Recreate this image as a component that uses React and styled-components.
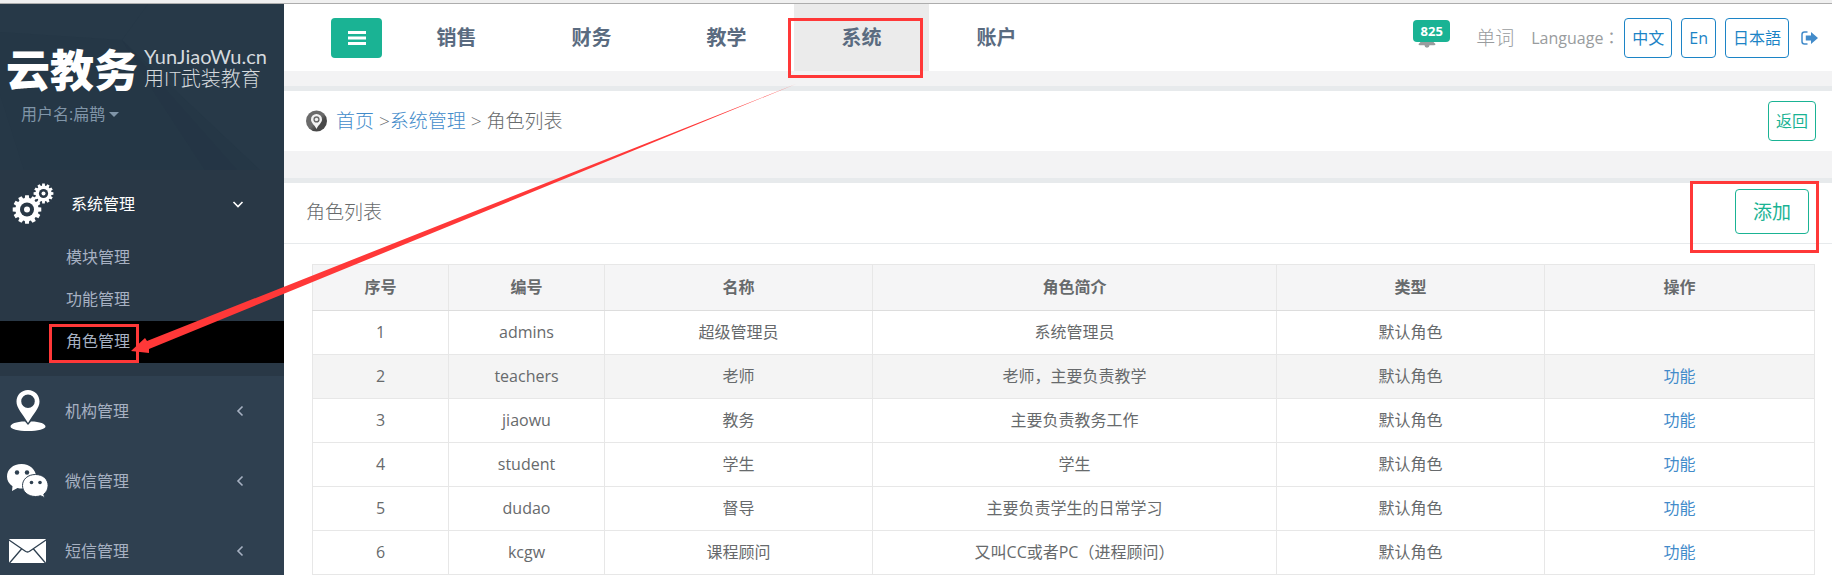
import React from "react";
import styled, { createGlobalStyle, css } from "styled-components";

const GlobalStyle = createGlobalStyle`
  * { box-sizing: border-box; }
  body {
    margin: 0;
    background: #f3f3f4;
    color: #676a6c;
    font-family: "Open Sans", "Noto Sans CJK SC", sans-serif;
    font-size: 16px;
    line-height: 24px;
  }
  a { color: #428bca; text-decoration: none; }
  button { font-family: inherit; cursor: pointer; }
`;

const RED = "#ff3838";

const Page = styled.div`
  position: relative;
  display: flex;
  flex-direction: column;
  height: 100vh;
  overflow: hidden;
`;

const WindowEdge = styled.div`
  flex: none;
  height: 4px;
  background: #f0f0f0;
  border-bottom: 1px solid #adadad;
`;

const Shell = styled.div`
  flex: 1;
  display: flex;
  min-height: 0;
`;

const Sidebar = styled.aside`
  flex: none;
  width: 284px;
  background: #2f4050;
`;

const Profile = styled.div`
  position: relative;
  height: 166px;
  padding: 40px 0 0 6px;
  background: #253746;
`;

const Facets = styled.svg`
  position: absolute;
  inset: 0;
  width: 100%;
  height: 100%;
`;

const Logo = styled.div`
  position: relative;
  display: flex;
  align-items: center;
  gap: 6px;
  height: 48px;
  color: #fff;
`;

const LogoName = styled.strong`
  font-family: "Noto Sans CJK SC", sans-serif;
  font-size: 44px;
  line-height: 48px;
  font-weight: 900;
`;

const LogoSide = styled.div`
  display: flex;
  flex-direction: column;
  color: #d5dade;
`;

const LogoDomain = styled.span`
  font-family: Lato, sans-serif;
  font-size: 20px;
  line-height: 20px;
`;

const LogoSlogan = styled.span`
  font-family: Lato, "Noto Sans CJK SC", sans-serif;
  font-size: 20px;
  line-height: 24px;
  font-weight: 300;
`;

const UserButton = styled.button`
  position: relative;
  display: flex;
  align-items: center;
  gap: 4px;
  margin: 10px 0 0 15px;
  padding: 0;
  border: 0;
  background: none;
  color: #8095a8;
  font-size: 16px;
  line-height: 24px;
`;

const Caret = styled.span`
  border: 5px solid transparent;
  border-top-color: currentColor;
  border-bottom: 0;
`;

const MenuSection = styled.div`
  background: ${(p) => (p.$open ? "#293846" : "transparent")};
  padding-bottom: ${(p) => (p.$open ? "13px" : "0")};
`;

const MenuLink = styled.a`
  display: flex;
  align-items: center;
  height: ${(p) => (p.$active ? "67px" : "70px")};
  padding: 0 ${(p) => (p.$active ? "40px" : "38px")} 0 ${(p) => (p.$active ? "12px" : "6px")};
  gap: 17px;
  && { color: ${(p) => (p.$active ? "#fff" : "#a7b1c2")}; }
  svg { flex: none; }
  span { flex: 1; }
`;

const SubLink = styled.a`
  position: relative;
  display: block;
  padding: 8px 0 10px 66px;
  background: ${(p) => (p.$active ? "#000" : "transparent")};
  && { color: #a7b1c2; }
`;

const Main = styled.main`
  flex: 1;
  min-width: 0;
`;

const TopBar = styled.header`
  display: flex;
  align-items: center;
  height: 67px;
  padding: 0 14px 0 47px;
  background: #fff;
`;

const MenuToggle = styled.button`
  display: flex;
  align-items: center;
  justify-content: center;
  width: 51px;
  height: 40px;
  margin-right: 7px;
  padding: 0;
  border: 0;
  border-radius: 4px;
  background: #1ab394;
`;

const Tabs = styled.nav`
  flex: 1;
  display: flex;
  align-self: stretch;
`;

const Tab = styled.a`
  position: relative;
  width: 135px;
  padding-top: 22px;
  text-align: center;
  font-size: 20px;
  font-weight: 700;
  && { color: #5a6b80; }
  background: ${(p) => (p.$active ? "#ebebeb" : "transparent")};
`;

const Tools = styled.div`
  display: flex;
  align-items: center;
  color: #999c9e;
`;

const Alerts = styled.a`
  position: relative;
  display: block;
  width: 38px;
  height: 30px;
  margin: 0 25px 8px 0;
  && { color: #999c9e; }
  svg { position: absolute; left: 5px; bottom: 1px; }
`;

const Badge = styled.span`
  position: absolute;
  top: 1px;
  left: 0;
  width: 37px;
  border-radius: 4px;
  background: #1ab394;
  color: #fff;
  font-size: 13px;
  line-height: 22px;
  font-weight: 700;
  text-align: center;
`;

const Words = styled.a`
  && { color: #999c9e; }
  margin-right: 17px;
  font-size: 19px;
  font-weight: 300;
`;

const LanguageLabel = styled.span`
  width: 93px;
  font-family: "Open Sans", "Noto Sans CJK TC", sans-serif;
  white-space: nowrap;
`;

const tones = { blue: "#1c84c6", green: "#1ab394" };

const OutlineButton = styled.button`
  height: 40px;
  padding: 0 7px;
  border: 1px solid ${(p) => tones[p.$tone]};
  border-radius: 4px;
  background: #fff;
  color: ${(p) => tones[p.$tone]};
  font-size: 16px;
  line-height: 24px;
  white-space: nowrap;
  ${(p) =>
    p.$large &&
    css`
      height: 45px;
      padding: 0 17px;
      font-size: 19px;
    `}
`;

const Languages = styled.div`
  display: flex;
  gap: 9px;
  margin-right: 12px;
`;

const SignOut = styled.a`
  display: flex;
`;

const Panel = styled.section`
  margin-top: ${(p) => (p.$first ? "15px" : "27px")};
  border-top: 5px solid #e7eaec;
  background: #fff;
`;

const CrumbRow = styled.div`
  display: flex;
  align-items: center;
  justify-content: space-between;
  height: 60px;
  padding: 0 16px 0 22px;
`;

const Crumbs = styled.nav`
  display: flex;
  align-items: center;
  gap: 9px;
  font-size: 19px;
  font-weight: 300;
`;

const PanelHead = styled.div`
  display: flex;
  align-items: flex-start;
  justify-content: space-between;
  height: 61px;
  padding: 6px 23px 0 22px;
  border-bottom: 1px solid #e7eaec;
`;

const PanelTitle = styled.h1`
  margin: 11px 0 0;
  font-size: 19px;
  line-height: 24px;
  font-weight: 300;
`;

const MarkedAction = styled.div`
  position: relative;
`;

const PanelBody = styled.div`
  padding: 20px 17px 0 28px;
`;

const Table = styled.table`
  width: 100%;
  table-layout: fixed;
  border-collapse: collapse;
  text-align: center;
  th, td {
    padding: 0 0 2px;
    height: 44px;
    border: 1px solid #e7e7e7;
  }
  th {
    height: 46px;
    background: #f5f5f6;
    border-bottom-color: #ddd;
    font-weight: 700;
  }
`;

const Row = styled.tr`
  background: ${(p) => (p.$shaded ? "#f4f4f4" : "#fff")};
`;

const Mark = styled.i`
  position: absolute;
  inset: ${(p) => p.$inset};
  border: 3px solid ${RED};
  pointer-events: none;
`;

const Arrow = styled.svg`
  position: absolute;
  top: 0;
  left: 0;
  pointer-events: none;
`;

function gearPath(cx, cy, outer, inner, teeth) {
  const pts = [];
  const step = (Math.PI * 2) / teeth;
  for (let i = 0; i < teeth; i++) {
    [[-0.36, inner], [-0.25, outer], [0.25, outer], [0.36, inner]].forEach(([o, r]) => {
      const a = (i + o) * step;
      pts.push(`${(cx + r * Math.cos(a)).toFixed(2)} ${(cy + r * Math.sin(a)).toFixed(2)}`);
    });
  }
  return `M${pts.join("L")}Z`;
}

const GearsIcon = () => (
  <svg width="42" height="42" viewBox="0 0 42 42" aria-hidden="true">
    <path d={gearPath(15, 26.5, 14.4, 11.6, 12)} fill="#fff" />
    <circle cx="15" cy="26.5" r="7" fill="#293846" />
    <circle cx="15" cy="26.5" r="3" fill="#fff" />
    <path d={gearPath(31.5, 10.5, 10, 8, 12)} fill="#fff" />
    <circle cx="31.5" cy="10.5" r="4.6" fill="#293846" />
    <circle cx="31.5" cy="10.5" r="2" fill="#fff" />
  </svg>
);

const PlaceIcon = () => (
  <svg width="42" height="42" viewBox="0 0 42 42" fill="#fff" aria-hidden="true">
    <path
      fillRule="evenodd"
      d="M22 0C15.500 0 10.500 5 10.500 11.500 10.500 18 16 23 22 33 28 23 33.500 18 33.500 11.500 33.500 5 28.500 0 22 0ZM22 4.500a6.800 6.800 0 1 1 0 13.600 6.800 6.800 0 0 1 0-13.600Z"
    />
    <path d="M19 31.500C10 31.500 4.500 34 4.500 36.500S12 41 22 41s17.500-2 17.500-4.500S34 31.500 25 31.500L22 35Z" />
  </svg>
);

const ChatIcon = () => (
  <svg width="42" height="34" viewBox="0 0 42 34" aria-hidden="true">
    <path fill="#fff" d="M15.500 0C7 0 1 5.500 1 12.500c0 4 2 7.500 5.500 9.800L6 27l5.500-3c1.500.4 3 .6 5 .6C25 24.500 30 19 30 12.500S24 0 15.500 0Z" />
    <path
      fill="#fff"
      stroke="#2f4050"
      d="M29.500 10.500c-7.500 0-13 4.700-13 11s5.500 11 13 11c2 0 3.500-.3 5-.8l4.200 2-.9-3.600c2.700-2 4.300-5 4.300-8.600 0-6.300-5.100-11-12.600-11Z"
    />
    <g fill="#2f4050">
      <circle cx="11" cy="8.500" r="2.200" />
      <circle cx="21" cy="8.500" r="2.200" />
      <circle cx="25.500" cy="18.500" r="1.800" />
      <circle cx="34" cy="18.500" r="1.800" />
    </g>
  </svg>
);

const MailIcon = () => (
  <svg width="42" height="26" viewBox="0 0 42 26" aria-hidden="true">
    <rect x="3" y="1" width="37" height="24" rx="1" fill="#fff" />
    <path d="M3 2 L19 13 Q21.500 15 24 13 L40 2 M3.500 25 L15.500 11 M39.500 25 L27.500 11" fill="none" stroke="#2f4050" strokeWidth="1.300" />
  </svg>
);

const Chevron = ({ down }) => (
  <svg width="12" height="12" viewBox="0 0 12 12" fill="none" stroke="currentColor" strokeWidth="1.600" aria-hidden="true">
    <path d={down ? "M1.500 4 L6 8.500 L10.500 4" : "M8.500 1.500 L4 6 L8.500 10.500"} />
  </svg>
);

const BarsIcon = () => (
  <svg width="18" height="14" viewBox="0 0 18 14" fill="#fff" aria-hidden="true">
    <path d="M0 0h18v3H0zM0 5.500h18v3H0zM0 11h18v3H0z" />
  </svg>
);

const BellIcon = () => (
  <svg width="18" height="18" viewBox="0 0 18 18" fill="currentColor" aria-hidden="true">
    <path d="M9 0a1 1 0 0 1 1 1.300C13 2 14 4.500 14 7c0 3.500 1.500 5.500 3.500 7 0 .7-.5 1.200-1.200 1.200H11.500a2.500 2.500 0 0 1-5 0H1.700C1 15.200.5 14.700.5 14 2.500 12.500 4 10.500 4 7c0-2.500 1-5 4-5.700A1 1 0 0 1 9 0Z" />
  </svg>
);

const SignOutIcon = () => (
  <svg width="17" height="14" viewBox="0 0 17 14" aria-hidden="true">
    <path d="M6.500 1H3.500Q1 1 1 3.500v7Q1 13 3.500 13h3" fill="none" stroke="#428bca" strokeWidth="1.500" />
    <path d="M10 1 L17 7 L10 13 V9.500 H4.800 V4.500 H10Z" fill="#428bca" />
  </svg>
);

const CrumbIcon = () => (
  <svg width="21" height="22" viewBox="0 0 21 22" aria-hidden="true">
    <defs>
      <linearGradient id="crumbShade" x1="0" y1="0" x2="1" y2="1">
        <stop offset="0.500" stopColor="#6b6b6b" />
        <stop offset="0.650" stopColor="#484848" />
      </linearGradient>
    </defs>
    <circle cx="10.500" cy="11" r="10.500" fill="url(#crumbShade)" />
    <path
      fill="#f2f2f2"
      fillRule="evenodd"
      d="M10.500 4A5.400 5.400 0 0 0 5 9.500C5 13 8.500 14.500 10.500 19 12.500 14.500 16 13 16 9.500A5.400 5.400 0 0 0 10.500 4Zm0 2.300a3.100 3.100 0 1 1 0 6.200 3.100 3.100 0 0 1 0-6.200Z"
    />
    <circle cx="10.500" cy="9.400" r="1.700" fill="#f2f2f2" />
  </svg>
);

const tabs = ["销售", "财务", "教学", "系统", "账户"];
const subItems = ["模块管理", "功能管理", "角色管理"];
const closedItems = [
  ["机构管理", PlaceIcon],
  ["微信管理", ChatIcon],
  ["短信管理", MailIcon],
];
const columns = [
  ["序号", 136],
  ["编号", 156],
  ["名称", 268],
  ["角色简介", 404],
  ["类型", 268],
  ["操作", 270],
];
const columnTotal = columns.reduce((sum, [, w]) => sum + w, 0);
const roles = [
  ["admins", "超级管理员", "系统管理员"],
  ["teachers", "老师", "老师，主要负责教学"],
  ["jiaowu", "教务", "主要负责教务工作"],
  ["student", "学生", "学生"],
  ["dudao", "督导", "主要负责学生的日常学习"],
  ["kcgw", "课程顾问", "又叫CC或者PC（进程顾问）"],
];

export default function App() {
  return (
    <Page>
      <GlobalStyle />
      <WindowEdge />
      <Shell>
        <Sidebar>
          <Profile>
            <Facets viewBox="0 0 284 166" preserveAspectRatio="none" aria-hidden="true">
              <path d="M148 0 L122 36 L260 166 L284 166 V0Z" fill="#273948" />
              <path d="M0 28 L122 36 L148 0 H0Z" fill="#273948" />
              <path d="M122 36 L237 166 H205 L150 82Z" fill="#243545" />
              <path d="M0 90 L24 166 H0Z" fill="#263847" />
            </Facets>
            <Logo>
              <LogoName>云教务</LogoName>
              <LogoSide>
                <LogoDomain>YunJiaoWu.cn</LogoDomain>
                <LogoSlogan>用IT武装教育</LogoSlogan>
              </LogoSide>
            </Logo>
            <UserButton type="button">
              用户名:扁鹊
              <Caret />
            </UserButton>
          </Profile>
          <MenuSection $open>
            <MenuLink href="#system" $active>
              <GearsIcon />
              <span>系统管理</span>
              <Chevron down />
            </MenuLink>
            {subItems.map((label) => (
              <SubLink href="#sub" key={label} $active={label === "角色管理"}>
                {label}
                {label === "角色管理" && <Mark $inset="3px 145px 0 49px" />}
              </SubLink>
            ))}
          </MenuSection>
          {closedItems.map(([label, Icon]) => (
            <MenuSection key={label}>
              <MenuLink href="#section">
                <Icon />
                <span>{label}</span>
                <Chevron />
              </MenuLink>
            </MenuSection>
          ))}
        </Sidebar>
        <Main>
          <TopBar>
            <MenuToggle type="button" aria-label="菜单">
              <BarsIcon />
            </MenuToggle>
            <Tabs>
              {tabs.map((label) => (
                <Tab href="#tab" key={label} $active={label === "系统"}>
                  {label}
                  {label === "系统" && <Mark $inset="14px 6px -7px -6px" />}
                </Tab>
              ))}
            </Tabs>
            <Tools>
              <Alerts href="#alerts">
                <BellIcon />
                <Badge>825</Badge>
              </Alerts>
              <Words href="#words">单词</Words>
              <LanguageLabel>Language：</LanguageLabel>
              <Languages>
                <OutlineButton type="button" $tone="blue">中文</OutlineButton>
                <OutlineButton type="button" $tone="blue">En</OutlineButton>
                <OutlineButton type="button" $tone="blue">日本語</OutlineButton>
              </Languages>
              <SignOut href="#logout" aria-label="退出">
                <SignOutIcon />
              </SignOut>
            </Tools>
          </TopBar>
          <Panel $first>
            <CrumbRow>
              <Crumbs>
                <CrumbIcon />
                <span>
                  <a href="#home">首页</a> &gt;<a href="#system">系统管理</a> &gt; 角色列表
                </span>
              </Crumbs>
              <OutlineButton type="button" $tone="green">返回</OutlineButton>
            </CrumbRow>
          </Panel>
          <Panel>
            <PanelHead>
              <PanelTitle>角色列表</PanelTitle>
              <MarkedAction>
                <OutlineButton type="button" $tone="green" $large>添加</OutlineButton>
                <Mark $inset="-8px -10px -19px -45px" />
              </MarkedAction>
            </PanelHead>
            <PanelBody>
              <Table>
                <colgroup>
                  {columns.map(([label, w]) => (
                    <col key={label} style={{ width: `${(w / columnTotal) * 100}%` }} />
                  ))}
                </colgroup>
                <thead>
                  <tr>
                    {columns.map(([label]) => (
                      <th key={label} scope="col">{label}</th>
                    ))}
                  </tr>
                </thead>
                <tbody>
                  {roles.map(([code, name, intro], i) => (
                    <Row key={code} $shaded={i === 1}>
                      <td>{i + 1}</td>
                      <td>{code}</td>
                      <td>{name}</td>
                      <td>{intro}</td>
                      <td>默认角色</td>
                      <td>{i > 0 && <a href="#functions">功能</a>}</td>
                    </Row>
                  ))}
                </tbody>
              </Table>
            </PanelBody>
          </Panel>
        </Main>
      </Shell>
      <Arrow width="800" height="360" viewBox="0 0 800 360" fill={RED} aria-hidden="true">
        <path d="M796 84 L147 341 L145 338 L131 351 L149 353 L149 349 Z" />
      </Arrow>
    </Page>
  );
}
